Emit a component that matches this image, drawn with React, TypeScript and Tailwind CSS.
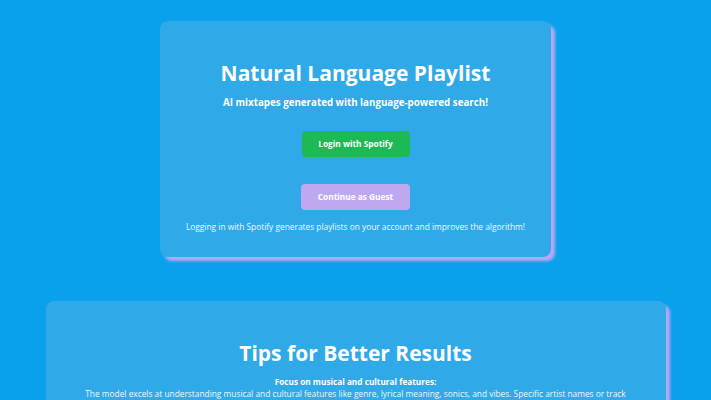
import React from "react";

export default function App() {
  return (
    <div
      className="min-h-[400px] w-full bg-[#09a1ec] pt-[21px] pb-10 flex flex-col items-center"
      style={{ fontFamily: '"Open Sans", "Noto Sans", sans-serif' }}
    >
      <div className="w-[391px] rounded-[8px] bg-[#2fa9e7] shadow-[4px_4px_3px_#b9a8f6] flex flex-col items-center pt-[38px] pb-[24px] text-white">
        <h1 className="text-[21px] leading-[28px] font-bold">Natural Language Playlist</h1>
        <p className="mt-[9px] text-[9.75px] leading-[14px] font-bold">
          AI mixtapes generated with language-powered search!
        </p>
        <button className="mt-[21px] w-[108px] h-[26px] rounded-[4px] bg-[#1db954] text-[8.3px] font-bold text-white">
          Login with Spotify
        </button>
        <button className="mt-[27px] w-[109px] h-[26px] rounded-[4px] bg-[#bea9f1] text-[8.3px] font-bold text-white">
          Continue as Guest
        </button>
        <p className="mt-[11px] text-[8.35px] leading-[12px] text-[#eef7fd]">
          Logging in with Spotify generates playlists on your account and improves the algorithm!
        </p>
      </div>

      <div className="mt-[44px] w-[620px] rounded-[8px] bg-[#2fa9e7] shadow-[4px_4px_3px_#b9a8f6] flex flex-col items-center pt-[38px] pb-[30px] px-[30px] text-white text-center">
        <h2 className="text-[21px] leading-[28px] font-bold">Tips for Better Results</h2>
        <p className="mt-[9px] text-[8.25px] leading-[12px] font-bold">Focus on musical and cultural features:</p>
        <p className="text-[8.35px] leading-[12px] text-[#eef7fd]">
          The model excels at understanding musical and cultural features like genre, lyrical meaning, sonics, and vibes. Specific artist names or track titles may not always be recognized, so describe the sound and feeling you want.
        </p>
      </div>
    </div>
  );
}
